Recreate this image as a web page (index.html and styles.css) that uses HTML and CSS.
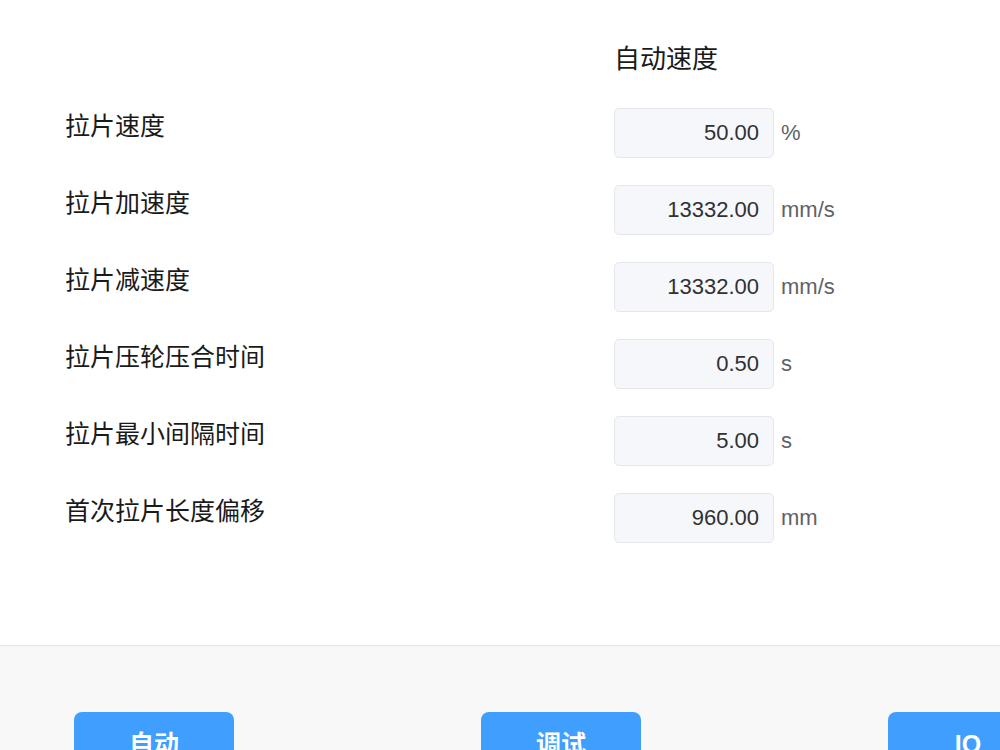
FILE: index.html
```html
<!DOCTYPE html>
<html lang="zh-CN">
<head>
    <meta charset="UTF-8">
    <meta name="viewport" content="width=device-width, initial-scale=1.0">
    <title>拉片参数</title>
    <link rel="stylesheet" href="styles.css">
</head>
<body>
    <div class="main">
        <div class="head-row">
            <div class="col-title">自动速度</div>
        </div>

        <div class="param-row">
            <div class="param-label">拉片速度</div>
            <div class="param-value">
                <input class="num-input" type="text" value="50.00" disabled>
                <span class="unit">%</span>
            </div>
        </div>
        <div class="param-row">
            <div class="param-label">拉片加速度</div>
            <div class="param-value">
                <input class="num-input" type="text" value="13332.00" disabled>
                <span class="unit">mm/s</span>
            </div>
        </div>
        <div class="param-row">
            <div class="param-label">拉片减速度</div>
            <div class="param-value">
                <input class="num-input" type="text" value="13332.00" disabled>
                <span class="unit">mm/s</span>
            </div>
        </div>
        <div class="param-row">
            <div class="param-label">拉片压轮压合时间</div>
            <div class="param-value">
                <input class="num-input" type="text" value="0.50" disabled>
                <span class="unit">s</span>
            </div>
        </div>
        <div class="param-row">
            <div class="param-label">拉片最小间隔时间</div>
            <div class="param-value">
                <input class="num-input" type="text" value="5.00" disabled>
                <span class="unit">s</span>
            </div>
        </div>
        <div class="param-row">
            <div class="param-label">首次拉片长度偏移</div>
            <div class="param-value">
                <input class="num-input" type="text" value="960.00" disabled>
                <span class="unit">mm</span>
            </div>
        </div>
    </div>

    <!-- 底部导航 -->
    <div class="footer">
        <button class="nav-btn">自动</button>
        <button class="nav-btn">调试</button>
        <button class="nav-btn">IO</button>
    </div>
</body>
</html>
```

FILE: styles.css
```css
/* 通用 */
html, body {
    margin: 0;
    padding: 0;
    height: 100%;
    overflow: hidden;
}
body {
    font-family: "Liberation Sans", Arial, "Noto Sans CJK SC", sans-serif;
    color: #1a1a1a;
    background: #ffffff;
}

/* 参数区 */
.main {
    height: 645px;
    box-sizing: border-box;
    padding: 44px 0 0 65px;
}
.head-row {
    display: flex;
    padding-left: 549px;
    height: 63px;
}
.col-title {
    font-size: 26px;
    line-height: 31px;
}
.param-row {
    display: flex;
    align-items: flex-start;
    height: 50px;
    margin-bottom: 27px;
}
.param-label {
    width: 549px;
    font-size: 25px;
    line-height: 38px;
}
.param-value {
    display: flex;
    align-items: center;
    padding-top: 1px;
}
.num-input {
    width: 160px;
    height: 50px;
    box-sizing: border-box;
    padding: 0 14px;
    border: 1px solid #e4e7ed;
    border-radius: 5px;
    background-color: #f5f7fa;
    color: #303133;
    font-family: "Liberation Sans", Arial, sans-serif;
    font-size: 22px;
    text-align: right;
    outline: none;
}
.unit {
    margin-left: 7px;
    font-size: 22px;
    color: #606266;
}

/* 底部 */
.footer {
    display: flex;
    gap: 247px;
    height: 105px;
    box-sizing: border-box;
    padding: 66px 0 0 74px;
    border-top: 1px solid #e4e4e4;
    background-color: #f8f8f8;
    overflow: hidden;
}
.nav-btn {
    flex: none;
    width: 160px;
    height: 70px;
    padding: 14px 0 0 0;
    align-self: flex-start;
    display: flex;
    justify-content: center;
    align-items: flex-start;
    border: none;
    border-radius: 8px;
    background-color: #409eff;
    color: #ffffff;
    font-family: "Liberation Sans", Arial, "Noto Sans CJK SC", sans-serif;
    font-size: 25px;
    font-weight: bold;
    line-height: 36px;
    cursor: pointer;
}
```
